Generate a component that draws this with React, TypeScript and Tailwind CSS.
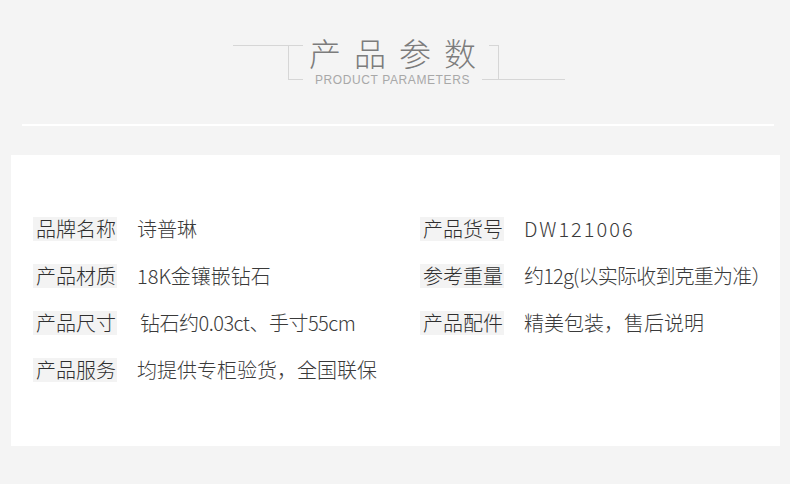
import React from 'react';

const FONT = { fontFamily: '"Noto Sans CJK SC", "Noto Sans", sans-serif' };

type Spec = { label: string; value: string; valueClass?: string };

const LEFT: Spec[] = [
    { label: '品牌名称', value: '诗普琳' },
    { label: '产品材质', value: '18K金镶嵌钻石' },
    { label: '产品尺寸', value: '钻石约0.03ct、手寸55cm', valueClass: 'ml-[23px] tracking-[-0.5px]' },
    { label: '产品服务', value: '均提供专柜验货，全国联保' },
];

const RIGHT: Spec[] = [
    { label: '产品货号', value: 'DW121006', valueClass: 'tracking-[2px] ml-[20px]' },
    { label: '参考重量', value: '约12g(以实际收到克重为准）', valueClass: 'ml-[20px] tracking-[-0.8px]' },
    { label: '产品配件', value: '精美包装，售后说明', valueClass: 'ml-[20px]' },
];

function SpecRow({ label, value, valueClass = 'ml-[20px]' }: Spec) {
    return (
        <div className="flex items-center h-[24px]">
            <span className="h-[24px] leading-[24px] pl-[3px] pr-[1px] bg-[#f3f3f3] text-[#2e2e2e] text-[20px] font-light whitespace-nowrap">
                {label}
            </span>
            <span className={`leading-[24px] text-[#3a3a3a] text-[20px] font-light whitespace-nowrap ${valueClass}`}>
                {value}
            </span>
        </div>
    );
}

function Heading() {
    return (
        <div className="flex justify-center items-start pt-[34px] pl-[8px]">
            {/* left bracket */}
            <div className="mt-[11px] w-[70px] h-[35px] border-t border-[#d6d6d6] flex justify-end">
                <div className="w-[15px] h-full border-l border-b border-[#d6d6d6]" />
            </div>

            <div className="w-[179px] flex flex-col items-center">
                <span className="text-[32px] leading-[36px] font-light tracking-[13px] mr-[-13px] text-[#7c7c7c]">
                    产品参数
                </span>
                <span
                    className="mt-[3px] text-[12px] leading-[14px] tracking-[0.6px] text-[#a8a8a8]"
                    style={{ fontFamily: '"Liberation Sans", Arial, sans-serif' }}
                >
                    PRODUCT PARAMETERS
                </span>
            </div>

            {/* right bracket */}
            <div className="mt-[11px] w-[83px] h-[35px] border-b border-[#d6d6d6] flex">
                <div className="ml-[7px] w-[10px] h-full border-t border-r border-[#d6d6d6]" />
            </div>
        </div>
    );
}

export default function App() {
    return (
        <div className="w-[790px] h-[484px] bg-[#f4f4f4] overflow-hidden" style={FONT}>
            <Heading />

            {/* divider */}
            <div className="mt-[37px] ml-[22px] w-[752px] h-[2px] bg-white" />

            {/* spec card */}
            <div className="mt-[29px] ml-[11px] w-[769px] h-[291px] bg-white pt-[62px] pl-[22px] grid grid-cols-[387px_1fr]">
                <div className="flex flex-col gap-[23px]">
                    {LEFT.map((s) => (
                        <SpecRow key={s.label} {...s} />
                    ))}
                </div>
                <div className="flex flex-col gap-[23px]">
                    {RIGHT.map((s) => (
                        <SpecRow key={s.label} {...s} />
                    ))}
                </div>
            </div>
        </div>
    );
}
